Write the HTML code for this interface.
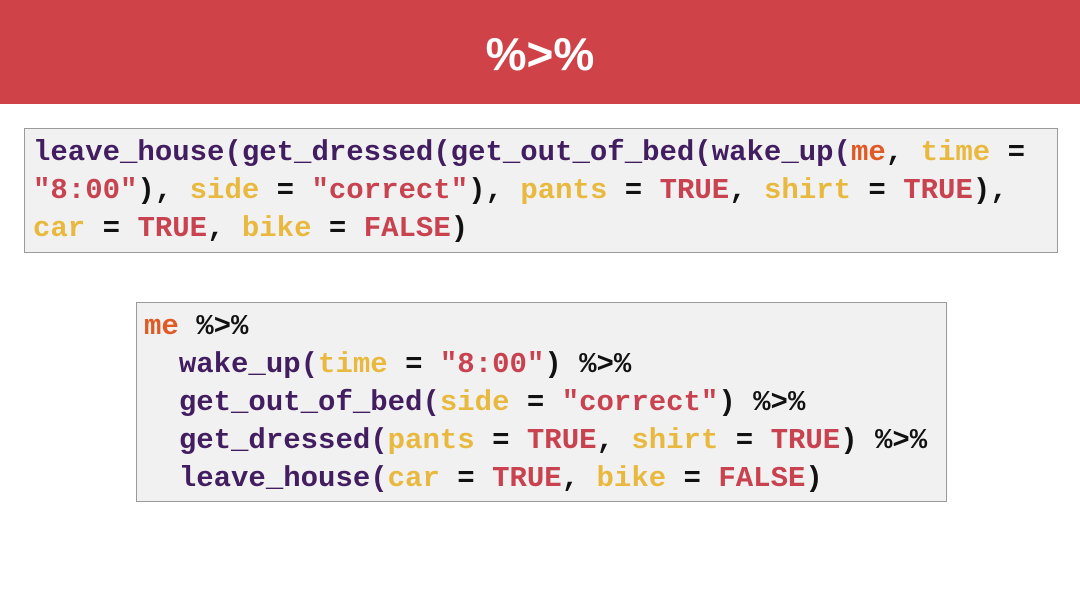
<!DOCTYPE html>
<html><head><style>
body{margin:0;width:1080px;height:605px;background:#fff;position:relative;overflow:hidden;font-family:"Liberation Mono",monospace;}
.hdr{position:absolute;left:0;top:0;width:1080px;height:104px;background:#cf4348;color:#fff;font:bold 46px "Liberation Sans",sans-serif;text-align:center;line-height:108px;}
.box{position:absolute;background:#f1f1f1;border:1px solid #9a9a9a;box-sizing:border-box;}
pre{margin:0;font:bold 29px/38px "Liberation Mono",monospace;color:#111;white-space:pre;letter-spacing:0px;}
.f{color:#421d60}.a{color:#e8b93e}.s{color:#c8434f}.m{color:#e05a26}
</style></head><body>
<div class="hdr">%&gt;%</div>
<div class="box" style="left:24px;top:128px;width:1034px;height:125px;">
<pre style="position:absolute;left:8px;top:5px;"><span class="f">leave_house(get_dressed(get_out_of_bed(wake_up(</span><span class="m">me</span>, <span class="a">time</span> =
<span class="s">"8:00"</span>), <span class="a">side</span> = <span class="s">"correct"</span>), <span class="a">pants</span> = <span class="s">TRUE</span>, <span class="a">shirt</span> = <span class="s">TRUE</span>),
<span class="a">car</span> = <span class="s">TRUE</span>, <span class="a">bike</span> = <span class="s">FALSE</span>)</pre>
</div>
<div class="box" style="left:136px;top:302px;width:811px;height:200px;">
<pre style="position:absolute;left:7px;top:5px;"><span class="m">me</span> %&gt;%
  <span class="f">wake_up(</span><span class="a">time</span> = <span class="s">"8:00"</span>) %&gt;%
  <span class="f">get_out_of_bed(</span><span class="a">side</span> = <span class="s">"correct"</span>) %&gt;%
  <span class="f">get_dressed(</span><span class="a">pants</span> = <span class="s">TRUE</span>, <span class="a">shirt</span> = <span class="s">TRUE</span>) %&gt;%
  <span class="f">leave_house(</span><span class="a">car</span> = <span class="s">TRUE</span>, <span class="a">bike</span> = <span class="s">FALSE</span>)</pre>
</div>
</body></html>
